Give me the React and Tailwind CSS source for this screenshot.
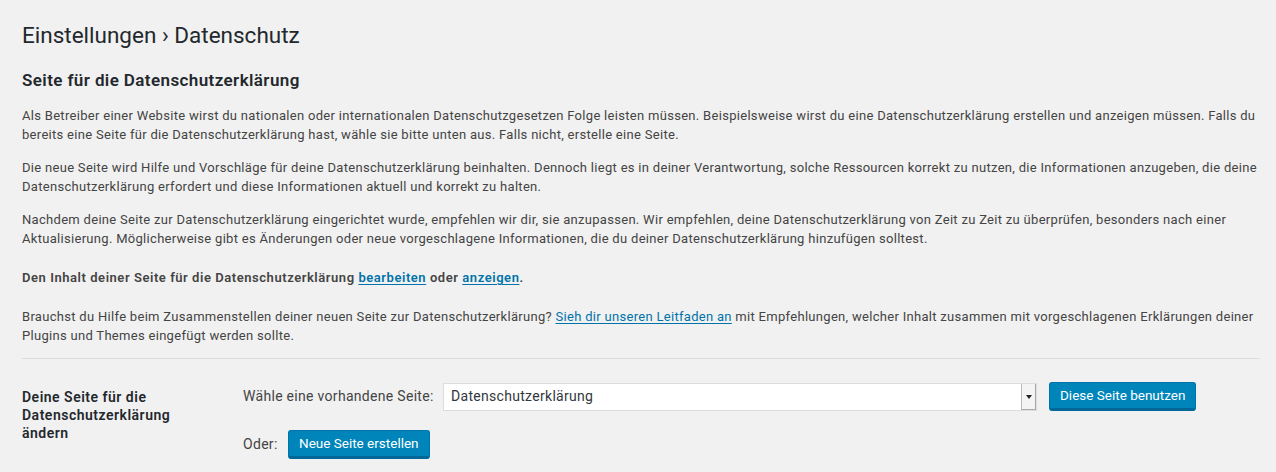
import React from 'react';

const font = { fontFamily: 'Roboto, "Noto Sans", sans-serif' };

function BlueButton({ children }) {
    return (
        <button
            type="button"
            className="h-[29px] px-[10px] bg-[#0085ba] border border-[#0073aa] border-b-[#006799] border-b-2 rounded-[3px] text-white text-[13.5px] leading-none shadow-[inset_0_-1px_0_#006799]"
        >
            {children}
        </button>
    );
}

export default function App() {
    return (
        <div className="min-h-[472px] bg-[#f1f1f1] text-[#444] pl-[22px] pr-[16px]" style={font}>
            <h1 className="pt-[21px] text-[22.5px] leading-[29px] text-[#23282d] font-normal">
                Einstellungen › Datenschutz
            </h1>
            <h2 className="mt-[19px] text-[17px] leading-[22px] font-semibold tracking-[0.4px] text-[#23282d]">
                Seite für die Datenschutzerklärung
            </h2>

            <div className="text-[13px] leading-[19px] tracking-[0.3px]">
                <p className="mt-[15px]">
                    Als Betreiber einer Website wirst du nationalen oder internationalen Datenschutzgesetzen Folge leisten müssen. Beispielsweise wirst du eine Datenschutzerklärung erstellen und anzeigen müssen. Falls du bereits eine Seite für die Datenschutzerklärung hast, wähle sie bitte unten aus. Falls nicht, erstelle eine Seite.
                </p>
                <p className="mt-[14px]">
                    Die neue Seite wird Hilfe und Vorschläge für deine Datenschutzerklärung beinhalten. Dennoch liegt es in deiner Verantwortung, solche Ressourcen korrekt zu nutzen, die Informationen anzugeben, die deine Datenschutzerklärung erfordert und diese Informationen aktuell und korrekt zu halten.
                </p>
                <p className="mt-[14px]">
                    Nachdem deine Seite zur Datenschutzerklärung eingerichtet wurde, empfehlen wir dir, sie anzupassen. Wir empfehlen, deine Datenschutzerklärung von Zeit zu Zeit zu überprüfen, besonders nach einer Aktualisierung. Möglicherweise gibt es Änderungen oder neue vorgeschlagene Informationen, die du deiner Datenschutzerklärung hinzufügen solltest.
                </p>
                <p className="mt-[20px] font-semibold tracking-[0.55px]">
                    Den Inhalt deiner Seite für die Datenschutzerklärung{' '}
                    <a href="#" className="text-[#0073aa] underline underline-offset-2">bearbeiten</a> oder{' '}
                    <a href="#" className="text-[#0073aa] underline underline-offset-2">anzeigen</a>.
                </p>
                <p className="mt-[20px]">
                    Brauchst du Hilfe beim Zusammenstellen deiner neuen Seite zur Datenschutzerklärung?{' '}
                    <a href="#" className="text-[#0073aa] underline underline-offset-2">Sieh dir unseren Leitfaden an</a> mit Empfehlungen, welcher Inhalt zusammen mit vorgeschlagenen Erklärungen deiner Plugins und Themes eingefügt werden sollte.
                </p>
            </div>

            <hr className="mt-[13px] border-0 border-t border-[#ddd]" />

            <div className="flex mt-[23px]">
                <div className="w-[221px] shrink-0 pr-[30px] text-[14px] leading-[18px] font-semibold tracking-[0.5px] text-[#23282d] pt-[6px]">
                    Deine Seite für die Datenschutzerklärung ändern
                </div>
                <div className="flex-1 flex flex-col gap-[19px]">
                    <div className="flex items-center">
                        <span className="text-[14px] tracking-[0.3px] w-[200px]">Wähle eine vorhandene Seite:</span>
                        <div className="w-[594px] h-[28px] bg-white border border-[#ddd] flex items-center">
                            <span className="flex-1 pl-[7px] text-[14px] tracking-[0.3px] text-[#32373c]">Datenschutzerklärung</span>
                            <span className="w-[15px] h-full bg-[#f4f4f4] border-l border-[#bbb] shadow-[inset_-1px_-1px_0_#aaa] flex items-center justify-center">
                                <svg width="6" height="4" viewBox="0 0 6 4"><path d="M0 0h6L3 4z" fill="#222" /></svg>
                            </span>
                        </div>
                        <div className="ml-[12px]">
                            <BlueButton>Diese Seite benutzen</BlueButton>
                        </div>
                    </div>
                    <div className="flex items-center">
                        <span className="text-[14px] tracking-[0.3px] w-[45px]">Oder:</span>
                        <BlueButton>Neue Seite erstellen</BlueButton>
                    </div>
                </div>
            </div>
        </div>
    );
}
